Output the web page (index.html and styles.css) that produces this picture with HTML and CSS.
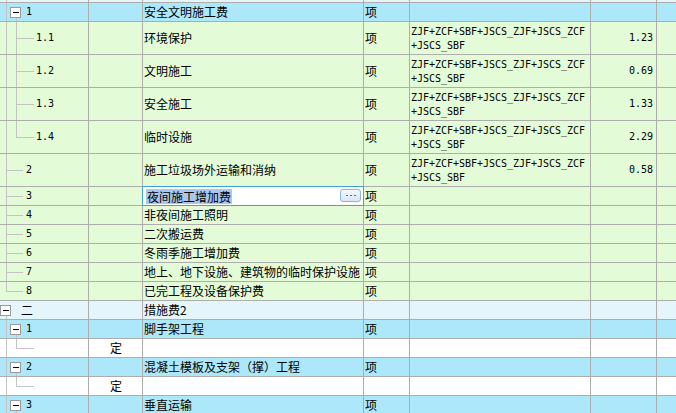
FILE: index.html
```html
<!DOCTYPE html>
<html lang="zh">
<head>
<meta charset="utf-8">
<title>措施项目</title>
<link rel="stylesheet" href="styles.css">
</head>
<body>
<div class="grid">
  <div class="row strip">
    <div class="cell ca"><i class="v v6"></i></div><div class="cell"></div><div class="cell"></div><div class="cell"></div><div class="cell"></div><div class="cell"></div><div class="cell"></div>
  </div>

  <div class="row blue">
    <div class="cell ca l1"><i class="v v6"></i><i class="v v16 down"></i><b class="box b10"></b><span class="mono">1</span></div>
    <div class="cell"></div>
    <div class="cell cc">安全文明施工费</div>
    <div class="cell cd">项</div>
    <div class="cell"></div><div class="cell"></div><div class="cell"></div>
  </div>

  <div class="row tall green">
    <div class="cell ca l2"><i class="v v6"></i><i class="v v16"></i><i class="h h16"></i><span class="mono">1.1</span></div>
    <div class="cell"></div>
    <div class="cell cc">环境保护</div>
    <div class="cell cd">项</div>
    <div class="cell ce mono">ZJF+ZCF+SBF+JSCS_ZJF+JSCS_ZCF<br>+JSCS_SBF</div>
    <div class="cell cf mono">1.23</div>
    <div class="cell"></div>
  </div>

  <div class="row tall green">
    <div class="cell ca l2"><i class="v v6"></i><i class="v v16"></i><i class="h h16"></i><span class="mono">1.2</span></div>
    <div class="cell"></div>
    <div class="cell cc">文明施工</div>
    <div class="cell cd">项</div>
    <div class="cell ce mono">ZJF+ZCF+SBF+JSCS_ZJF+JSCS_ZCF<br>+JSCS_SBF</div>
    <div class="cell cf mono">0.69</div>
    <div class="cell"></div>
  </div>

  <div class="row tall green">
    <div class="cell ca l2"><i class="v v6"></i><i class="v v16"></i><i class="h h16"></i><span class="mono">1.3</span></div>
    <div class="cell"></div>
    <div class="cell cc">安全施工</div>
    <div class="cell cd">项</div>
    <div class="cell ce mono">ZJF+ZCF+SBF+JSCS_ZJF+JSCS_ZCF<br>+JSCS_SBF</div>
    <div class="cell cf mono">1.33</div>
    <div class="cell"></div>
  </div>

  <div class="row tall green">
    <div class="cell ca l2"><i class="v v6"></i><i class="v v16 up"></i><i class="h h16"></i><span class="mono">1.4</span></div>
    <div class="cell"></div>
    <div class="cell cc">临时设施</div>
    <div class="cell cd">项</div>
    <div class="cell ce mono">ZJF+ZCF+SBF+JSCS_ZJF+JSCS_ZCF<br>+JSCS_SBF</div>
    <div class="cell cf mono">2.29</div>
    <div class="cell"></div>
  </div>

  <div class="row tall green">
    <div class="cell ca l1"><i class="v v6"></i><i class="h h6"></i><span class="mono">2</span></div>
    <div class="cell"></div>
    <div class="cell cc">施工垃圾场外运输和消纳</div>
    <div class="cell cd">项</div>
    <div class="cell ce mono">ZJF+ZCF+SBF+JSCS_ZJF+JSCS_ZCF<br>+JSCS_SBF</div>
    <div class="cell cf mono">0.58</div>
    <div class="cell"></div>
  </div>

  <div class="row green">
    <div class="cell ca l1"><i class="v v6"></i><i class="h h6"></i><span class="mono">3</span></div>
    <div class="cell"></div>
    <div class="cell cc edit">
      <div class="editor"><span class="sel">夜间施工增加费</span><span class="more"><i></i><i></i><i></i></span></div>
    </div>
    <div class="cell cd">项</div>
    <div class="cell"></div><div class="cell"></div><div class="cell"></div>
  </div>

  <div class="row green">
    <div class="cell ca l1"><i class="v v6"></i><i class="h h6"></i><span class="mono">4</span></div>
    <div class="cell"></div>
    <div class="cell cc">非夜间施工照明</div>
    <div class="cell cd">项</div>
    <div class="cell"></div><div class="cell"></div><div class="cell"></div>
  </div>

  <div class="row green">
    <div class="cell ca l1"><i class="v v6"></i><i class="h h6"></i><span class="mono">5</span></div>
    <div class="cell"></div>
    <div class="cell cc">二次搬运费</div>
    <div class="cell cd">项</div>
    <div class="cell"></div><div class="cell"></div><div class="cell"></div>
  </div>

  <div class="row green">
    <div class="cell ca l1"><i class="v v6"></i><i class="h h6"></i><span class="mono">6</span></div>
    <div class="cell"></div>
    <div class="cell cc">冬雨季施工增加费</div>
    <div class="cell cd">项</div>
    <div class="cell"></div><div class="cell"></div><div class="cell"></div>
  </div>

  <div class="row green">
    <div class="cell ca l1"><i class="v v6"></i><i class="h h6"></i><span class="mono">7</span></div>
    <div class="cell"></div>
    <div class="cell cc">地上、地下设施、建筑物的临时保护设施</div>
    <div class="cell cd">项</div>
    <div class="cell"></div><div class="cell"></div><div class="cell"></div>
  </div>

  <div class="row green">
    <div class="cell ca l1"><i class="v v6 up"></i><i class="h h6"></i><span class="mono">8</span></div>
    <div class="cell"></div>
    <div class="cell cc">已完工程及设备保护费</div>
    <div class="cell cd">项</div>
    <div class="cell"></div><div class="cell"></div><div class="cell"></div>
  </div>

  <div class="row pale">
    <div class="cell ca l0"><i class="v v6 down"></i><b class="box b0"></b><span>二</span></div>
    <div class="cell"></div>
    <div class="cell cc">措施费2</div>
    <div class="cell cd"></div>
    <div class="cell"></div><div class="cell"></div><div class="cell"></div>
  </div>

  <div class="row blue">
    <div class="cell ca l1"><i class="v v6"></i><i class="v v16 down"></i><b class="box b10"></b><span class="mono">1</span></div>
    <div class="cell"></div>
    <div class="cell cc">脚手架工程</div>
    <div class="cell cd">项</div>
    <div class="cell"></div><div class="cell"></div><div class="cell"></div>
  </div>

  <div class="row white">
    <div class="cell ca"><i class="v v6"></i><i class="v v16 up"></i><i class="h h16"></i></div>
    <div class="cell cb">定</div>
    <div class="cell cc"></div>
    <div class="cell cd"></div>
    <div class="cell"></div><div class="cell"></div><div class="cell"></div>
  </div>

  <div class="row blue">
    <div class="cell ca l1"><i class="v v6"></i><i class="v v16 down"></i><b class="box b10"></b><span class="mono">2</span></div>
    <div class="cell"></div>
    <div class="cell cc">混凝土模板及支架（撑）工程</div>
    <div class="cell cd">项</div>
    <div class="cell"></div><div class="cell"></div><div class="cell"></div>
  </div>

  <div class="row white">
    <div class="cell ca"><i class="v v6"></i><i class="v v16 up"></i><i class="h h16"></i></div>
    <div class="cell cb">定</div>
    <div class="cell cc"></div>
    <div class="cell cd"></div>
    <div class="cell"></div><div class="cell"></div><div class="cell"></div>
  </div>

  <div class="row blue">
    <div class="cell ca l1"><i class="v v6"></i><i class="v v16 down"></i><b class="box b10"></b><span class="mono">3</span></div>
    <div class="cell"></div>
    <div class="cell cc">垂直运输</div>
    <div class="cell cd">项</div>
    <div class="cell"></div><div class="cell"></div><div class="cell"></div>
  </div>
</div>
</body>
</html>
```

FILE: styles.css
```css
* { box-sizing: border-box; }
html, body { margin: 0; padding: 0; }
body {
  width: 676px;
  height: 413px;
  overflow: hidden;
  background: #ffffff;
  font-family: "Noto Sans CJK SC", "Noto Sans", sans-serif;
  font-size: 12px;
  color: #000000;
}
.grid { display: flex; flex-direction: column; }
.row {
  display: grid;
  grid-template-columns: 89px 54px 221px 46px 181px 66px 1fr;
  height: 19px;
  flex: none;
}
.row.tall { height: 33px; }
.row.strip { height: 3px; }

.cell {
  position: relative;
  display: flex;
  align-items: center;
  border-right: 1px solid #adadad;
  border-bottom: 1px solid #adadad;
  white-space: nowrap;
  overflow: hidden;
  line-height: 18px;
}
.cell:last-child { border-right: none; }

.strip .cell { background: #e6f5fa; }
.blue .cell { background: #ade8fa; }
.green .cell { background: #e3fcd7; }
.pale .cell { background: #e4f6fb; }
.white .cell { background: #ffffff; }

.mono {
  font-family: "DejaVu Sans Mono", "Liberation Mono", monospace;
  font-size: 10px;
  letter-spacing: -0.02px;
}

.ca.l0 { padding-left: 21px; }
.ca.l1 { padding-left: 26px; }
.ca.l2 { padding-left: 36px; }
.cb { justify-content: center; padding-left: 1px; }
.cc { padding-left: 1px; }
.cd { padding-left: 1px; }
.ce {
  display: block;
  padding: 3px 0 0 1px;
  line-height: 14px;
}
.cf { justify-content: flex-end; padding-right: 3px; }

/* tree connector lines */
.v, .h { position: absolute; background: #c4c4c4; }
.v { width: 1px; top: 0; bottom: 0; }
.v.up { bottom: 50%; }
.v.down { top: 15px; }
.v6 { left: 6px; }
.v16 { left: 16px; }
.h { height: 1px; top: 50%; }
.h6 { left: 6px; width: 17px; }
.h16 { left: 16px; width: 18px; }

.box {
  position: absolute;
  top: 4px;
  width: 11px;
  height: 11px;
  border: 1px solid #9a9a9a;
  background: #ffffff;
}
.box::after {
  content: "";
  position: absolute;
  left: 2px;
  top: 4px;
  width: 6px;
  height: 1px;
  background: #000000;
}
.b0 { left: 0; }
.b10 { left: 10px; }

/* in-place editor */
.cell.edit { overflow: visible; }
.editor {
  position: absolute;
  left: -1px;
  top: -1px;
  right: -1px;
  bottom: -1px;
  z-index: 2;
  border: 1px solid #3fa3d6;
  background: #ffffff;
  padding: 1px 0 0 3px;
}
.sel {
  display: inline-block;
  background: #a9c7ef;
  line-height: 15px;
  height: 15px;
  padding: 0 1px;
}
.more {
  position: absolute;
  right: 2px;
  top: 2px;
  width: 21px;
  height: 13px;
  border: 1px solid #8db5dc;
  border-radius: 3px;
  background: linear-gradient(#f4f8fd, #dbe6f3);
  display: flex;
  align-items: center;
  justify-content: center;
  gap: 2px;
}
.more i {
  width: 2px;
  height: 1px;
  background: #3f6fae;
}
```
